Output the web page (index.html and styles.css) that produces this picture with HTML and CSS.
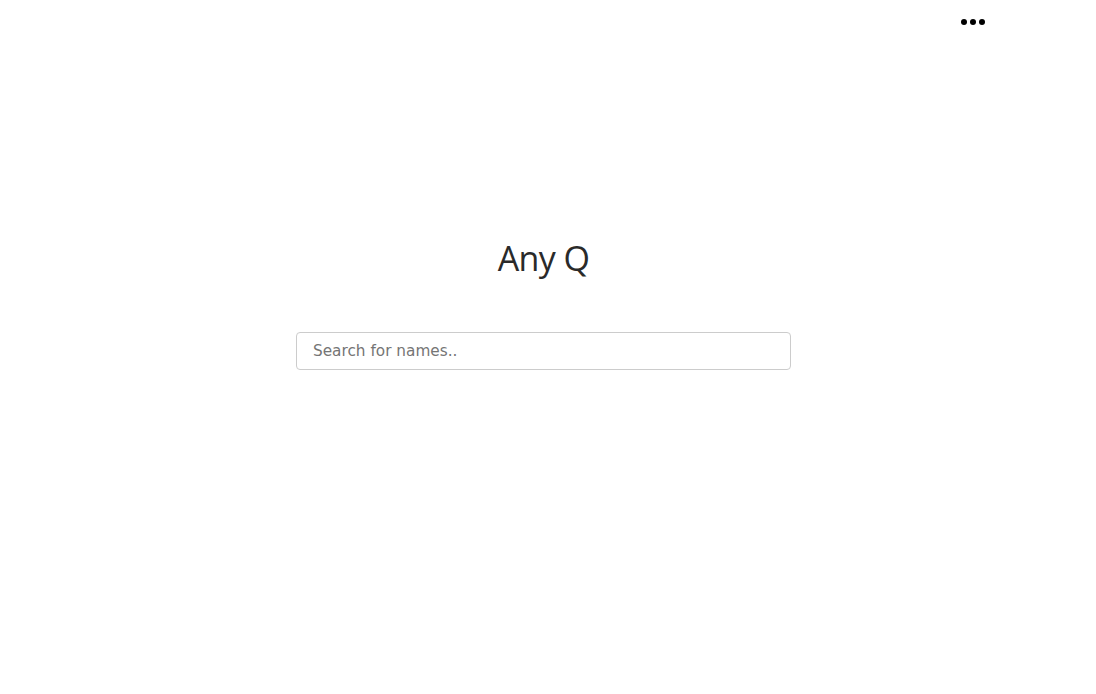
FILE: index.html
```html
<!DOCTYPE html>
<html>
<head>
<meta charset="utf-8">
<link rel="stylesheet" href="styles.css">
</head>
<body>
<header class="topbar">
  <button class="more" aria-label="More">
    <span class="dot"></span><span class="dot"></span><span class="dot"></span>
  </button>
</header>
<main class="center">
  <h1 class="title">Any Q</h1>
  <input class="search" type="text" placeholder="Search for names..">
</main>
</body>
</html>
```
FILE: styles.css
```css
html, body {
  margin: 0;
  padding: 0;
  background: #fff;
}
body {
  font-family: "Open Sans", sans-serif;
}
.topbar {
  display: flex;
  justify-content: flex-end;
  padding: 19px 111px 0 0;
  height: 6px;
}
.more {
  display: flex;
  gap: 3px;
  border: 0;
  background: none;
  padding: 0;
  cursor: pointer;
}
.dot {
  width: 6px;
  height: 6px;
  border-radius: 50%;
  background: #000;
}
.center {
  display: flex;
  flex-direction: column;
  align-items: center;
  padding: 208px 9px 0 0;
}
.title {
  margin: 0;
  font-family: "Open Sans", sans-serif;
  font-weight: 400;
  font-size: 34px;
  letter-spacing: -0.6px;
  color: #2a2a2a;
  line-height: 50px;
}
.search {
  margin-top: 49px;
  width: 495px;
  height: 38px;
  box-sizing: border-box;
  border: 1px solid #ccc;
  border-radius: 4px;
  padding: 0 16px;
  font-family: "DejaVu Sans", sans-serif;
  font-size: 15.3px;
  color: #333;
  outline: none;
}
.search::placeholder {
  color: #757575;
}
```
